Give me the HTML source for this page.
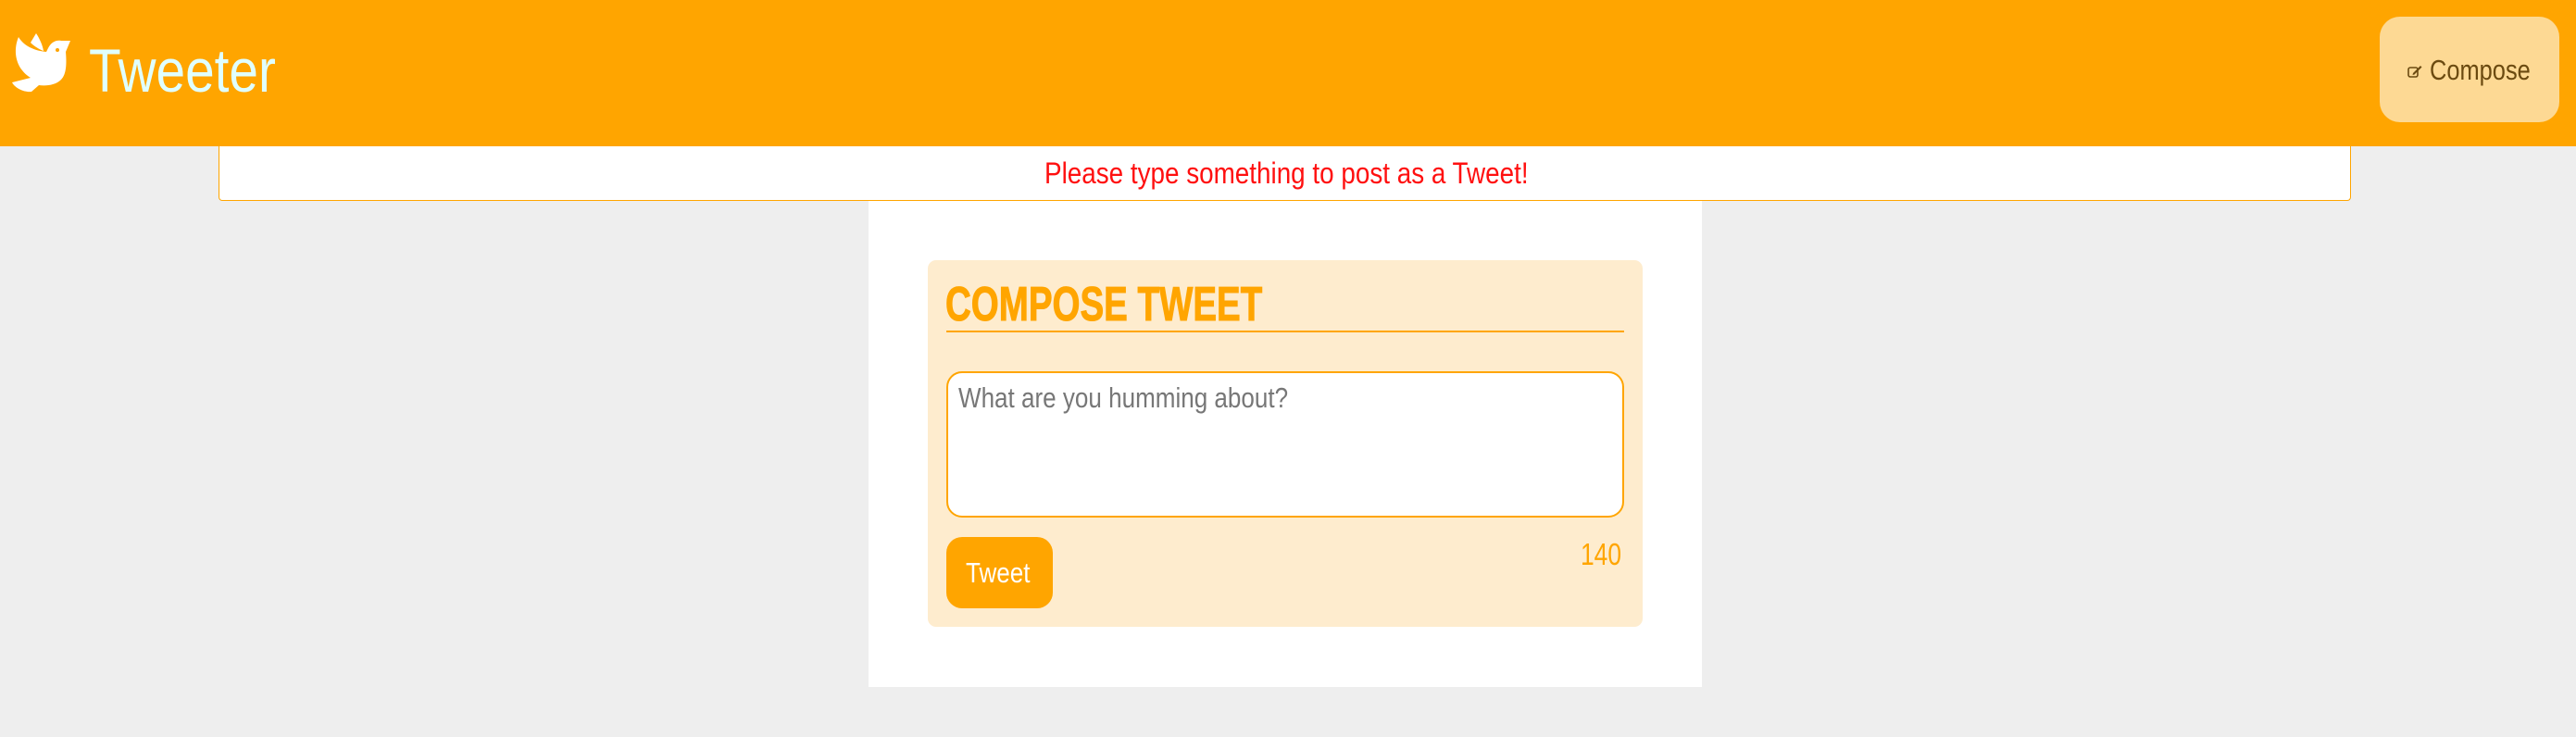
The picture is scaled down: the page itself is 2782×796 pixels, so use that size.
<!DOCTYPE html>
<html><head><meta charset="utf-8"><style>
*{margin:0;padding:0;box-sizing:border-box}
body{width:2782px;height:796px;background:#eeeeee;position:relative;overflow:hidden;font-family:"Liberation Sans",sans-serif}
.a{position:absolute;white-space:nowrap}
.c{display:inline-block;transform-origin:0 0}
</style></head><body>
<div class="a" style="left:0;top:0;width:2782px;height:158px;background:#ffa500"></div>
<svg class="a" style="left:0;top:0" width="90" height="110" viewBox="0 0 90 110">
<path fill="#fff" d="M20 40 C15 52 16 66 24 76 C27 80 30 82 33 84 L13 89 C16 95 26 100 34 99 L42 92 C50 93 60 92 66 86 C72 80 72 68 71 56 L76 44 L66 44 C60 43 55 46 52 52 L50 56 C38 55 26 50 20 40 Z"/>
<path fill="#fff" d="M33 46 L39 36 C43 42 46 49 47 55 C42 53 37 50 33 46 Z"/>
<circle cx="62" cy="54" r="2" fill="#ffa500"/>
</svg>
<div class="a" style="left:96px;top:38px;font-size:66px;color:#e0ffff;font-weight:300;line-height:76px"><span class="c" style="transform:scaleX(0.86)">Tweeter</span></div>
<div class="a" style="left:2570px;top:18px;width:194px;height:114px;background:#fdd994;border-radius:22px"></div>
<svg class="a" style="left:2600px;top:70px" width="16" height="14" viewBox="0 0 16 14"><rect x="1" y="3" width="10" height="10" rx="2" fill="none" stroke="#6b4a10" stroke-width="1.6"/><path d="M6 9 L14 1 L15.5 2.5 L7.5 10.5 L5.5 11 Z" fill="#6b4a10"/></svg>
<div class="a" style="left:2624px;top:58px;font-size:31px;color:#6b4a10;line-height:36px"><span class="c" style="transform:scaleX(0.82)">Compose</span></div>
<div class="a" style="left:938px;top:158px;width:900px;height:584px;background:#fff"></div>
<div class="a" style="left:236px;top:158px;width:2303px;height:59px;background:#fff;border:1.5px solid #ffa500;border-top:none;border-radius:0 0 4px 4px"></div>
<div class="a" style="left:1128px;top:168px;font-size:32px;color:#ff1010;line-height:38px"><span class="c" style="transform:scaleX(0.87)">Please type something to post as a Tweet!</span></div>
<div class="a" style="left:1002px;top:281px;width:772px;height:396px;background:#feecce;border-radius:9px"></div>
<div class="a" style="left:1021px;top:300px;font-size:50px;font-weight:bold;color:#ffa500;line-height:54px;-webkit-text-stroke:1px #ffa500"><span class="c" style="transform:scaleX(0.77) scaleY(1.04)">COMPOSE TWEET</span></div>
<div class="a" style="left:1022px;top:357px;width:732px;height:2px;background:#ffa500"></div>
<div class="a" style="left:1022px;top:401px;width:732px;height:158px;background:#fff;border:2px solid #ffa500;border-radius:17px"></div>
<div class="a" style="left:1035px;top:411px;font-size:31px;color:#777;line-height:38px"><span class="c" style="transform:scaleX(0.84)">What are you humming about?</span></div>
<div class="a" style="left:1022px;top:580px;width:115px;height:77px;background:#ffa500;border-radius:17px"></div>
<div class="a" style="left:1043px;top:600px;font-size:31px;color:#fff;line-height:38px"><span class="c" style="transform:scaleX(0.84)">Tweet</span></div>
<div class="a" style="left:1707px;top:580px;font-size:33px;color:#ffa500;line-height:38px"><span class="c" style="transform:scaleX(0.8)">140</span></div>
</body></html>
